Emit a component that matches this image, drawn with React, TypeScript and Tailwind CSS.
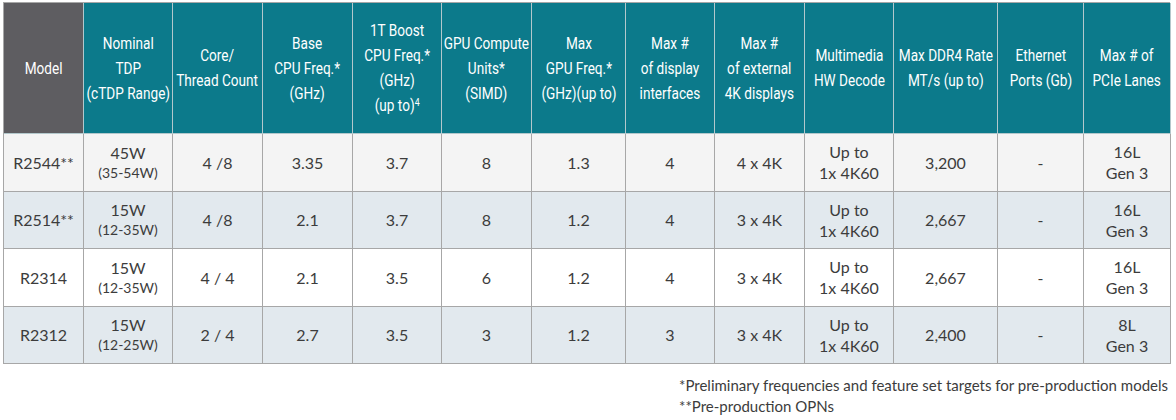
import React from "react";

const cols =
  "grid grid-cols-[80px_89px_90px_90px_89px_90px_94px_89px_90px_89px_104px_86px_87px]";

// no condensed family installed, so the header text is squeezed horizontally
const headFont = { fontFamily: 'Roboto, "Noto Sans", sans-serif' };

const headers: React.ReactNode[] = [
  <>Model</>,
  <>
    Nominal
    <br />
    TDP
    <br />
    (cTDP Range)
  </>,
  <>
    Core/
    <br />
    Thread Count
  </>,
  <>
    Base
    <br />
    CPU Freq.*
    <br />
    (GHz)
  </>,
  <>
    1T Boost
    <br />
    CPU Freq.*
    <br />
    (GHz)
    <br />
    (up to)<sup className="text-[11px]">4</sup>
  </>,
  <>
    GPU Compute
    <br />
    Units*
    <br />
    (SIMD)
  </>,
  <>
    Max
    <br />
    GPU Freq.*
    <br />
    (GHz)(up to)
  </>,
  <>
    Max #
    <br />
    of display
    <br />
    interfaces
  </>,
  <>
    Max #
    <br />
    of external
    <br />
    4K displays
  </>,
  <>
    Multimedia
    <br />
    HW Decode
  </>,
  <>
    Max DDR4 Rate
    <br />
    MT/s (up to)
  </>,
  <>
    Ethernet
    <br />
    Ports (Gb)
  </>,
  <>
    Max # of
    <br />
    PCIe Lanes
  </>,
];

interface Row {
  model: string;
  tdp: string;
  range: string;
  cores: string;
  base: string;
  boost: string;
  cu: string;
  gpu: string;
  disp: string;
  ext: string;
  ddr: string;
  pcie: string;
}

const rows: Row[] = [
  { model: "R2544**", tdp: "45W", range: "(35-54W)", cores: "4 /8", base: "3.35", boost: "3.7", cu: "8", gpu: "1.3", disp: "4", ext: "4 x 4K", ddr: "3,200", pcie: "16L" },
  { model: "R2514**", tdp: "15W", range: "(12-35W)", cores: "4 /8", base: "2.1", boost: "3.7", cu: "8", gpu: "1.2", disp: "4", ext: "3 x 4K", ddr: "2,667", pcie: "16L" },
  { model: "R2314", tdp: "15W", range: "(12-35W)", cores: "4 / 4", base: "2.1", boost: "3.5", cu: "6", gpu: "1.2", disp: "4", ext: "3 x 4K", ddr: "2,667", pcie: "16L" },
  { model: "R2312", tdp: "15W", range: "(12-25W)", cores: "2 / 4", base: "2.7", boost: "3.5", cu: "3", gpu: "1.2", disp: "3", ext: "3 x 4K", ddr: "2,400", pcie: "8L" },
];

const rowBg = ["bg-[#f4f4f4]", "bg-[#e2e9ee]", "bg-white", "bg-[#e2e9ee]"];

function Cell({ children }: { children: React.ReactNode }) {
  return (
    <div className="flex flex-col items-center justify-center border-r border-b border-[#a7a7a7] text-center leading-[21px]">
      {children}
    </div>
  );
}

export default function App() {
  return (
    <div
      className="w-[1176px] h-[420px] bg-white pl-[3px] pt-[2px] text-[#3c3c3c]"
      style={{ fontFamily: 'Lato, "Open Sans", sans-serif' }}
    >
      <div className="w-[1167px] border-l border-t border-[#a7a7a7]">
        <div className={`${cols} h-[131px]`}>
          {headers.map((h, i) => (
            <div
              key={i}
              className={`flex items-center justify-center border-r border-b border-[#b3c8cc] text-center text-[17px] leading-[25px] text-white whitespace-nowrap ${
                i === 0 ? "bg-[#5e5d61]" : "bg-[#0c7a8b]"
              }`}
              style={headFont}
            >
              <div className="scale-x-[0.8]">{h}</div>
            </div>
          ))}
        </div>
        {rows.map((r, i) => (
          <div key={r.model} className={`${cols} h-[57.5px] text-[16px] ${rowBg[i]}`}>
            <Cell>{r.model}</Cell>
            <Cell>
              <span>{r.tdp}</span>
              <span className="text-[14px] leading-[20px]">{r.range}</span>
            </Cell>
            <Cell>{r.cores}</Cell>
            <Cell>{r.base}</Cell>
            <Cell>{r.boost}</Cell>
            <Cell>{r.cu}</Cell>
            <Cell>{r.gpu}</Cell>
            <Cell>{r.disp}</Cell>
            <Cell>{r.ext}</Cell>
            <Cell>
              <span>Up to</span>
              <span>1x 4K60</span>
            </Cell>
            <Cell>{r.ddr}</Cell>
            <Cell>-</Cell>
            <Cell>
              <span>{r.pcie}</span>
              <span>Gen 3</span>
            </Cell>
          </div>
        ))}
      </div>
      <div className="flex justify-end w-[1165px] mt-[11px]">
        <div className="text-[15px] leading-[21px]">
          <div>*Preliminary frequencies and feature set targets for pre-production models</div>
          <div>**Pre-production OPNs</div>
        </div>
      </div>
    </div>
  );
}
